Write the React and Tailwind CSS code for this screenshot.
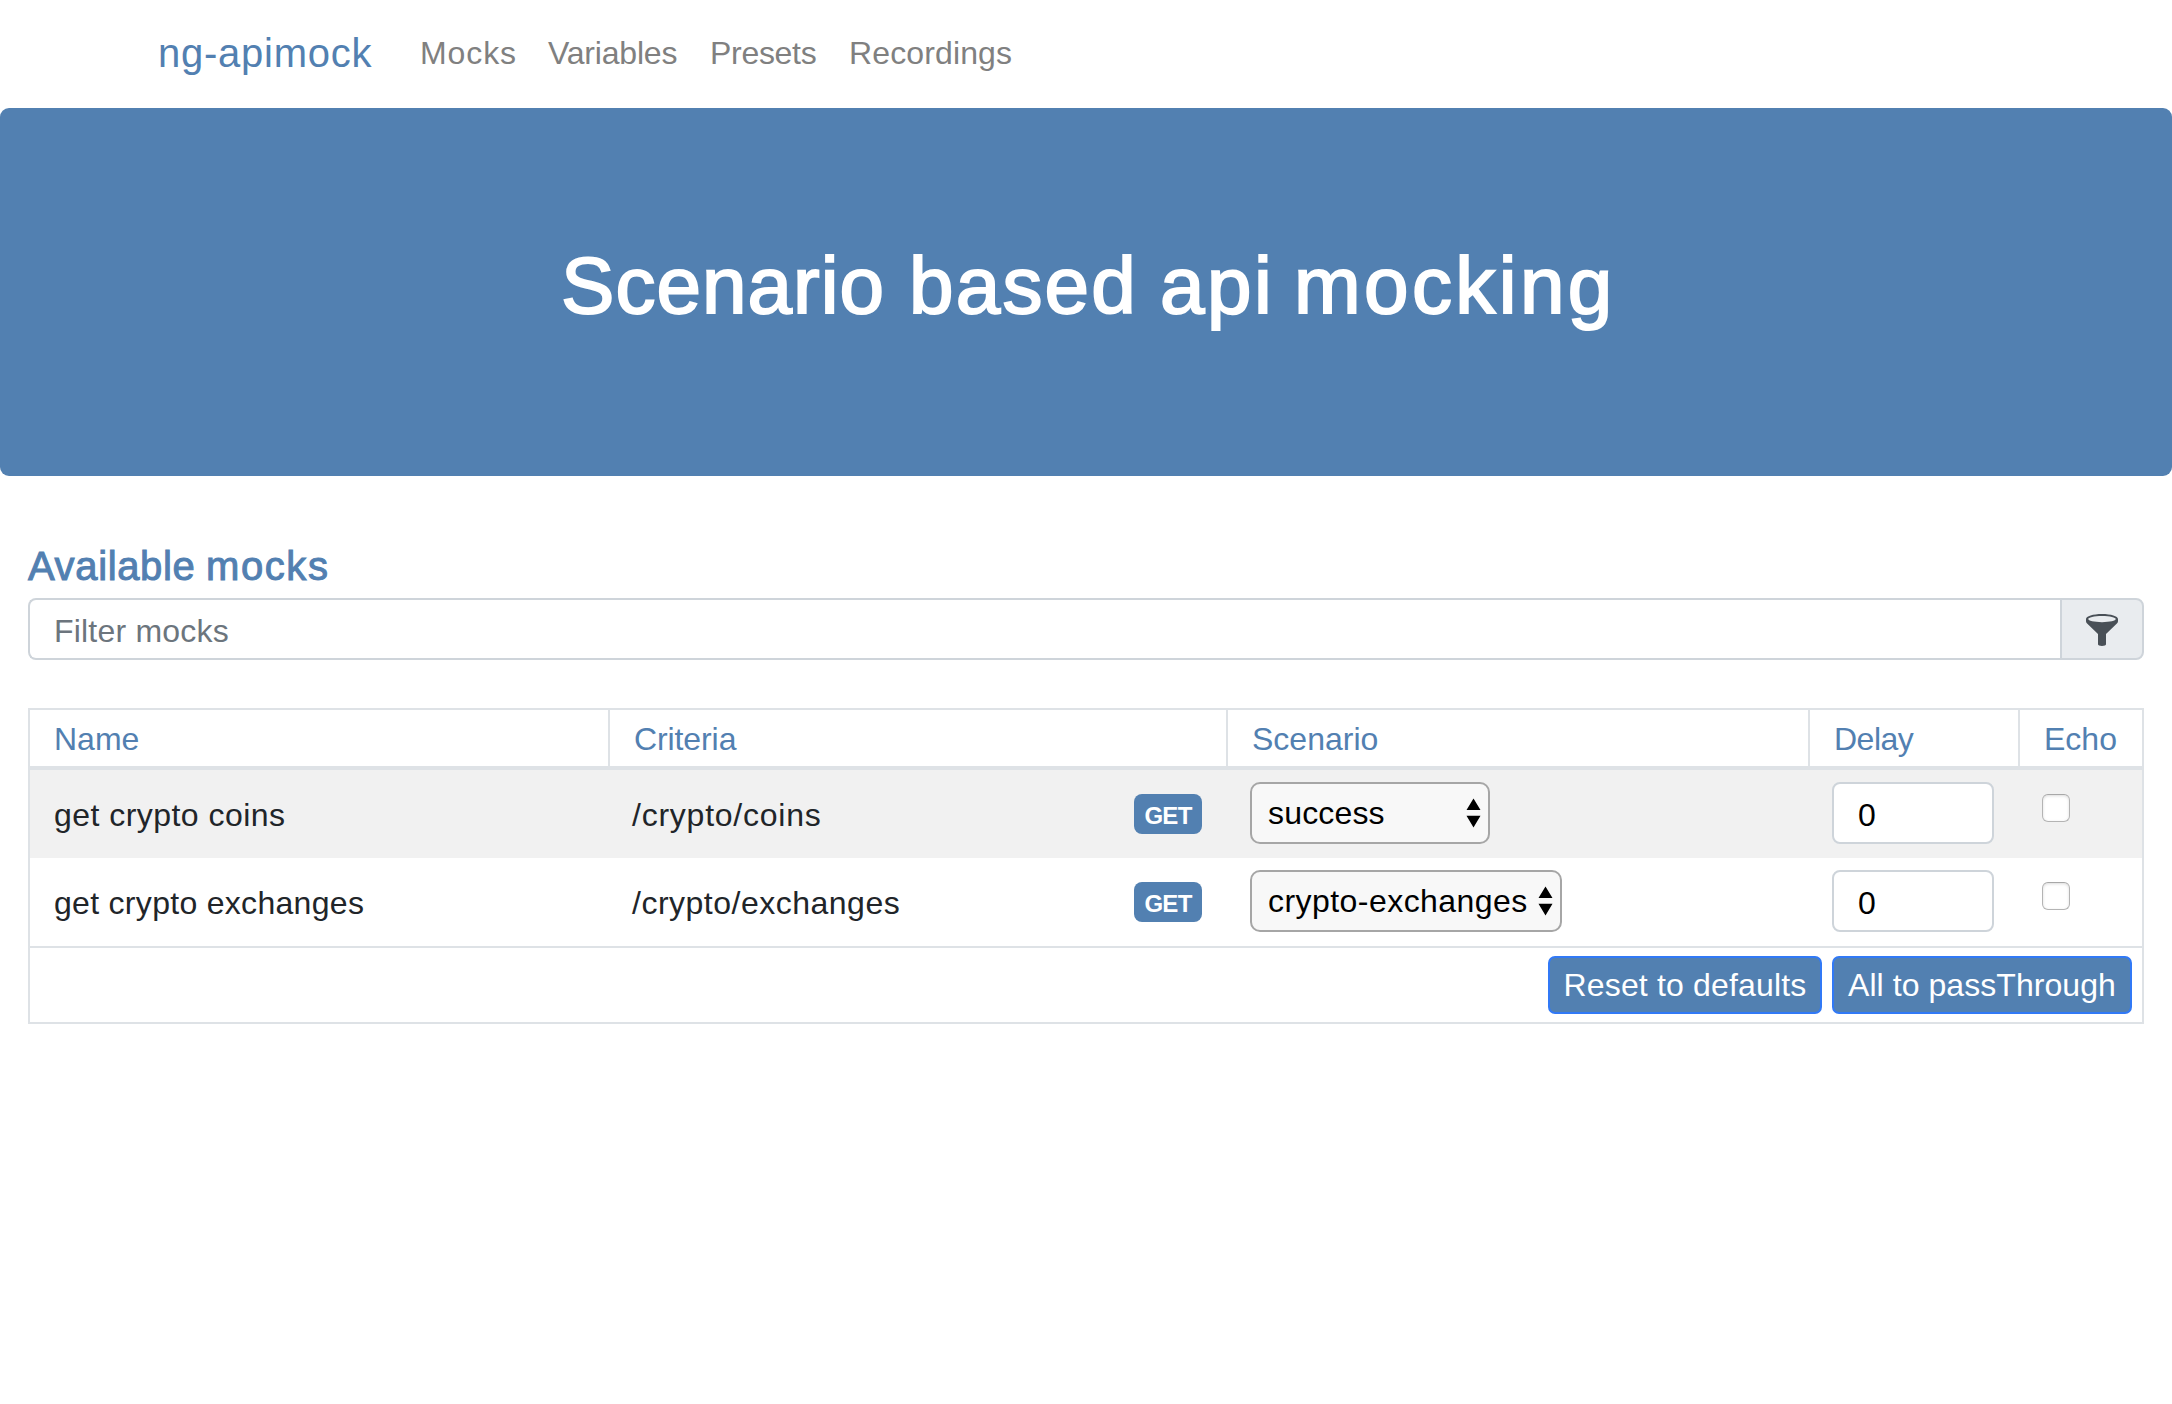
import React from "react";

const mocks = [
  {
    name: "get crypto coins",
    nameClass: "tracking-[0.46px]",
    path: "/crypto/coins",
    pathClass: "tracking-[0.76px]",
    scenario: "success",
    selectClass: "w-[240px] tracking-[0.17px]",
    rowClass: "bg-[#f1f1f1]",
  },
  {
    name: "get crypto exchanges",
    nameClass: "tracking-[0.3px]",
    path: "/crypto/exchanges",
    pathClass: "tracking-[0.5px]",
    scenario: "crypto-exchanges",
    selectClass: "w-[312px] tracking-[0.45px]",
    rowClass: "bg-white",
  },
];

const COLUMNS = "grid grid-cols-[580px_618px_582px_210px_124px]";

function FunnelIcon() {
  return (
    <svg width="32" height="32" viewBox="0 0 32 32" fill="#495057" aria-hidden="true">
      <path
        fillRule="evenodd"
        d="M16 0C7 0 0 2.2 0 5v2.2c0 .9.4 1.5 1.100 2.200L12 20v10.300C12 31.400 13.700 32 16 32s4-.6 4-1.700V20L30.900 9.400c.7-.7 1.100-1.300 1.100-2.200V5C32 2.200 25 0 16 0Zm0 2c8 0 13.800 1.500 13.800 3.100S24 8.200 16 8.200 2.200 6.700 2.200 5.100 8 2 16 2Z"
      />
    </svg>
  );
}

function ScenarioSelect({ value, className }) {
  return (
    <div className="relative flex w-fit">
      <select
        defaultValue={value}
        className={
          "h-[62px] appearance-none rounded-[10px] border-2 border-[#a6a6a6] bg-[#f8f8f8] pl-4 text-[32px] leading-[38px] text-black " +
          className
        }
      >
        <option>{value}</option>
      </select>
      <svg
        className="pointer-events-none absolute top-4 right-[9px]"
        width="15"
        height="30"
        viewBox="0 0 15 30"
        aria-hidden="true"
      >
        <path d="M7.500 0.500L14.500 12H.5ZM.5 17.800H14.500L7.500 29.500Z" fill="#000" />
      </svg>
    </div>
  );
}

function MockRow({ mock }) {
  return (
    <div className={COLUMNS + " h-[88px] items-center text-[#212529] " + mock.rowClass}>
      <div className={"pt-0.5 pl-[24px] " + mock.nameClass}>{mock.name}</div>
      <div className="flex items-center justify-between pr-[26px] pl-[22px]">
        <span className={"pt-0.5 " + mock.pathClass}>{mock.path}</span>
        <span className="flex h-10 w-[68px] items-center justify-center rounded-lg bg-[#5280b1] pt-[3px] text-[24px] leading-none font-bold tracking-[-0.7px] text-white">
          GET
        </span>
      </div>
      <div className="-mt-0.5 pl-[22px]">
        <ScenarioSelect value={mock.scenario} className={mock.selectClass} />
      </div>
      <div className="-mt-0.5 pl-[22px]">
        <input
          type="text"
          defaultValue="0"
          className="block h-[62px] w-[162px] rounded-lg border-2 border-[#ced4da] bg-white pt-1 pr-4 pl-[24px] text-[32px] text-black"
        />
      </div>
      <div className="-mt-[12px] pl-[22px]">
        <input
          type="checkbox"
          className="block size-7 appearance-none rounded-[6px] border border-[#b4b4b4] border-t-[#a8a8a8] bg-white shadow-[inset_0_1px_3px_rgba(0,0,0,0.14)]"
        />
      </div>
    </div>
  );
}

export default function App() {
  return (
    <div className="min-h-[1404px] bg-white font-['Liberation_Sans',Arial,sans-serif] text-[32px] leading-[48px]">
      <nav className="flex h-[108px] items-center pl-[158px]">
        <a className="-mt-[3px] w-[262px] text-[40px] leading-[60px] tracking-[0.75px] text-[#5280b1]">
          ng-apimock
        </a>
        <div className="-mt-0.5 flex text-[#808080]">
          <a className="w-[128px] tracking-[0.91px]">Mocks</a>
          <a className="w-[162px] tracking-[-0.2px]">Variables</a>
          <a className="w-[139px] tracking-[-0.3px]">Presets</a>
          <a className="tracking-[0.13px]">Recordings</a>
        </div>
      </nav>

      <header className="h-[368px] rounded-[9px] bg-[#5280b1] pt-[130px] pl-[561px]">
        <h1 className="flex text-[80px] leading-[96px] font-medium whitespace-pre text-white [-webkit-text-stroke:2px_white]">
          <span className="w-[348px] tracking-[1.05px]">{"Scenario "}</span>
          <span className="w-[251px] tracking-[2.2px]">{"based "}</span>
          <span className="w-[134px] tracking-[2.5px]">{"api "}</span>
          <span className="tracking-[3.4px]">mocking</span>
        </h1>
      </header>

      <main className="px-7 pt-[66px]">
        <h2 className="flex text-[40px] leading-[48px] font-medium whitespace-pre text-[#5280b1] [-webkit-text-stroke:1px_#5280b1]">
          <span className="w-[178px] tracking-[0.65px]">{"Available "}</span>
          <span className="tracking-[1.6px]">mocks</span>
        </h2>

        <div className="mt-2 flex h-[62px]">
          <input
            type="text"
            placeholder="Filter mocks"
            className="min-w-0 flex-1 rounded-l-lg border-2 border-r-0 border-[#ced4da] bg-white pt-1 pl-[24px] tracking-[0.2px] placeholder:text-[#6c757d]"
          />
          <div className="flex w-[84px] items-center justify-center rounded-r-lg border-2 border-[#ced4da] bg-[#e9ecef] pt-[2px]">
            <FunnelIcon />
          </div>
        </div>

        <section className="mt-12 border-2 border-[#dee2e6]">
          <div className={COLUMNS + " h-[60px] border-b-4 border-[#dee2e6] text-[#5280b1]"}>
            <div className="border-r-2 border-[#dee2e6] pt-[5px] pl-[24px]">Name</div>
            <div className="border-r-2 border-[#dee2e6] pt-[5px] pl-[24px] tracking-[-0.1px]">Criteria</div>
            <div className="border-r-2 border-[#dee2e6] pt-[5px] pl-[24px]">Scenario</div>
            <div className="border-r-2 border-[#dee2e6] pt-[5px] pl-[24px] tracking-[-0.5px]">Delay</div>
            <div className="pt-[5px] pl-[24px]">Echo</div>
          </div>

          {mocks.map((mock) => (
            <MockRow key={mock.name} mock={mock} />
          ))}

          <div className="flex h-[76px] items-center justify-end gap-[10px] border-t-2 border-[#dee2e6] pr-[10px] text-white">
            <button className="h-[58px] w-[274px] rounded-[7px] border-2 border-[#3179f6] bg-[#5280b1] leading-[54px] tracking-[0.17px] whitespace-nowrap">
              Reset to defaults
            </button>
            <button className="h-[58px] w-[300px] rounded-[7px] border-2 border-[#3179f6] bg-[#5280b1] leading-[54px] tracking-[0.06px] whitespace-nowrap">
              All to passThrough
            </button>
          </div>
        </section>
      </main>
    </div>
  );
}
